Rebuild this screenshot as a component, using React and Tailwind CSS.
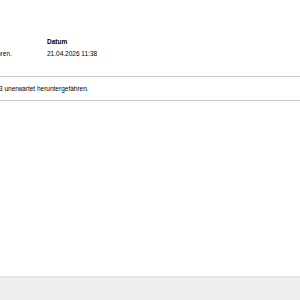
import React from 'react';

const font = { fontFamily: '"Liberation Sans", Arial, sans-serif' };

export default function App() {
  return (
    <div className="w-[300px] h-[300px] flex flex-col bg-white text-black overflow-hidden" style={font}>
      <div className="flex-1">
        <div className="pt-[36px] flex text-[6.5px] leading-[12px]">
          <div className="w-[47px] shrink-0"></div>
          <div className="font-bold">Datum</div>
        </div>
        <div className="flex text-[6.5px] leading-[11px]">
          <div className="w-[47px] shrink-0 overflow-hidden whitespace-nowrap">
            <span className="inline-block -ml-[3px]">hren.</span>
          </div>
          <div>21.04.2026 11:38</div>
        </div>
        <div className="mt-[17px] border-t border-[#c8c8c8]"></div>
        <div className="pt-[6px] pb-[5px] text-[6.5px] leading-[12px] -ml-[1px] whitespace-nowrap">
          3 unerwartet heruntergefahren.
        </div>
        <div className="border-t border-[#c8c8c8]"></div>
      </div>
      <div className="h-[24px] border-t-2 border-[#e3e3e3] bg-[#efefef]"></div>
    </div>
  );
}
